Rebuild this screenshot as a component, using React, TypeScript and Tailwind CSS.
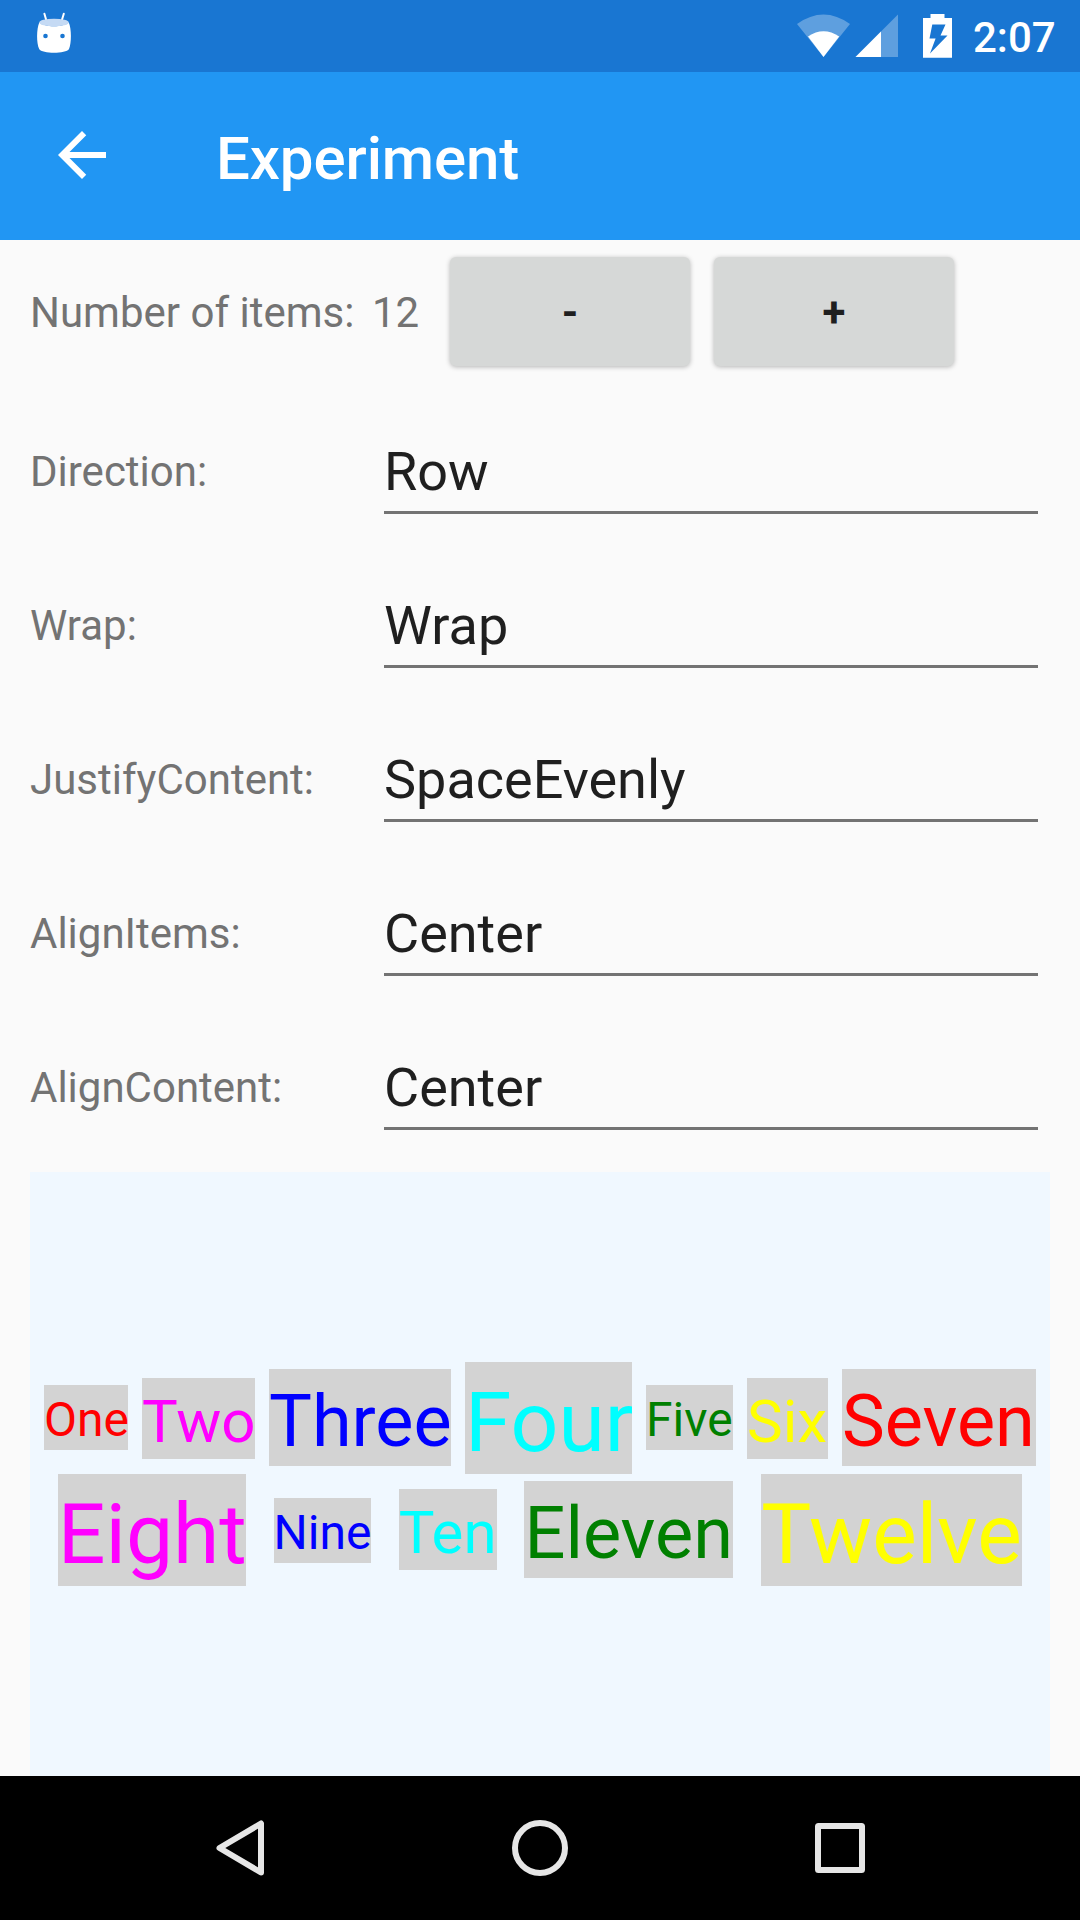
const FIELDS = [
  { label: 'Direction:', value: 'Row' },
  { label: 'Wrap:', value: 'Wrap' },
  { label: 'JustifyContent:', value: 'SpaceEvenly' },
  { label: 'AlignItems:', value: 'Center' },
  { label: 'AlignContent:', value: 'Center' },
];

const SMALL = 'h-[65px] text-[48px] leading-[69px]';
const MEDIUM = 'h-[81px] text-[60px] leading-[87px]';
const LARGE = 'mb-px h-[97px] text-[72px] leading-[105px]';
const HUGE = 'h-[112px] text-[84px] leading-[121px]';

const ITEMS = [
  { text: 'One', style: `${SMALL} mb-px w-[84px] text-[#ff0000]` },
  { text: 'Two', style: `${MEDIUM} w-[113px] text-[#ff00ff]` },
  { text: 'Three', style: `${LARGE} w-[182px] text-[#0000ff]` },
  { text: 'Four', style: `${HUGE} w-[167px] text-[#00ffff]` },
  { text: 'Five', style: `${SMALL} mb-px w-[87px] text-[#008000]` },
  { text: 'Six', style: `${MEDIUM} w-[81px] text-[#ffff00]` },
  { text: 'Seven', style: `${LARGE} w-[194px] text-[#ff0000]` },
  { text: 'Eight', style: `${HUGE} w-[188px] text-[#ff00ff]` },
  { text: 'Nine', style: `${SMALL} w-[97.4px] text-[#0000ff]` },
  { text: 'Ten', style: `${MEDIUM} mb-px w-[98px] text-[#00ffff]` },
  { text: 'Eleven', style: `${LARGE} w-[209px] text-[#008000]` },
  { text: 'Twelve', style: `${HUGE} w-[261px] text-[#ffff00]` },
];

function StatusBar() {
  return (
    <header className="flex h-[72px] shrink-0 items-start bg-[#1976d2] pl-9 text-white">
      <svg className="mt-3 h-[42px] w-9" viewBox="36 12 36 42">
        <path d="M44.4 13.8 46.5 21M63.8 13.8 61.6 21" stroke="white" strokeWidth="2" strokeLinecap="round" />
        <path d="M39.3 22.5C45 27.5 63 27.5 68.8 22.5C71.6 29 71.6 43 69 49C66 54 42 54 39.2 49C36.4 43 36.4 29 39.3 22.5Z" fill="white" />
        <ellipse cx="54" cy="22.6" rx="14.8" ry="3.9" fill="#c5daf4" />
        <circle cx="45.5" cy="36" r="2.3" fill="#1976d2" />
        <circle cx="62.5" cy="36" r="2.3" fill="#1976d2" />
      </svg>
      <svg className="ml-[724px] h-[72px] w-[160px]" viewBox="796 0 160 72">
        <path d="M797 24Q823.5 5 850 24L823.5 57Z" fill="white" fillOpacity=".3" />
        <path d="M808 36.5Q823.5 26 839.2 36.5L823.5 57Z" fill="white" />
        <path d="M898 14.5V57H855.5Z" fill="white" fillOpacity=".3" />
        <path d="M881 31.5V57H855.5Z" fill="white" />
        <path fillRule="evenodd" d="M930.5 14H944.5V18H952V57.7H923V18H930.5ZM932.3 24.5 929.5 38.5H935.6L930 53.5 947.5 35.5H940.5L945.5 24.5Z" fill="white" />
      </svg>
      <span className="ml-[17px] text-[42px] font-medium leading-[76px]">2:07</span>
    </header>
  );
}

function AppBar() {
  return (
    <div className="flex h-[168px] shrink-0 items-start bg-[#2196f3] text-white">
      <svg className="ml-[46px] mt-[47px] h-[72px] w-[72px]" viewBox="0 0 24 24" fill="currentColor">
        <path d="M20 11H7.83l5.59-5.59L12 4l-8 8 8 8 1.41-1.41L7.83 13H20v-2z" />
      </svg>
      <h1 className="ml-[98px] mt-[50px] text-[60px] font-medium leading-[74px] tracking-[-0.1px]">Experiment</h1>
    </div>
  );
}

function StepButton({ children }: { children: string }) {
  return (
    <button className="h-[109px] w-[240px] rounded-[6px] bg-[#d6d8d7] text-[42px] font-bold text-[#1f1f1f] shadow-[0_1px_5px_rgba(0,0,0,0.28)]">
      <span className="block pt-[3px] leading-[106px]">{children}</span>
    </button>
  );
}

export default function App() {
  return (
    <div className="flex h-[1920px] w-[1080px] flex-col overflow-hidden bg-[#fafafa] font-[Roboto,sans-serif]">
      <StatusBar />
      <AppBar />
      <main className="flex flex-1 flex-col px-[30px]">
        <div className="flex h-[154px] items-start pt-[17px] text-[42px] leading-[111px] text-[#737373]">
          <span className="w-[342px] whitespace-nowrap">Number of items:</span>
          <span className="w-[78px]">12</span>
          <div className="flex gap-6">
            <StepButton>-</StepButton>
            <StepButton>+</StepButton>
          </div>
        </div>
        {FIELDS.map((f) => (
          <div key={f.label} className="flex h-[154px]">
            <label className="w-[354px] pt-[53px] text-[42px] leading-[50px] text-[#737373]">{f.label}</label>
            <div className="h-[120px] w-[654px] border-b-[3px] border-[#737373] pt-[46px] text-[54px] leading-[64px] text-[#1f1f1f]">
              {f.value}
            </div>
          </div>
        ))}
        <section className="mt-[8px] flex flex-1 flex-wrap content-center items-center justify-evenly bg-[#f0f8ff]">
          {ITEMS.map((item) => (
            <span key={item.text} className={`whitespace-nowrap bg-[#d3d3d3] ${item.style}`}>
              {item.text}
            </span>
          ))}
        </section>
      </main>
      <nav className="flex h-36 shrink-0 items-center justify-center gap-[210px] bg-black">
        <svg className="h-[90px] w-[90px]" viewBox="0 0 90 90" fill="none" stroke="#e6e6e6" strokeWidth="6" strokeLinejoin="round">
          <path d="M66 20.5V69.5L24.5 45Z" />
        </svg>
        <svg className="h-[90px] w-[90px]" viewBox="0 0 90 90" fill="none" stroke="#e6e6e6" strokeWidth="6">
          <circle cx="45" cy="45" r="25" />
        </svg>
        <svg className="h-[90px] w-[90px]" viewBox="0 0 90 90">
          <path fill="#e6e6e6" fillRule="evenodd" d="M23.5 20H66.5Q70 20 70 23.5V66.5Q70 70 66.5 70H23.5Q20 70 20 66.5V23.5Q20 20 23.5 20ZM26 26V64H64V26Z" />
        </svg>
      </nav>
    </div>
  );
}
